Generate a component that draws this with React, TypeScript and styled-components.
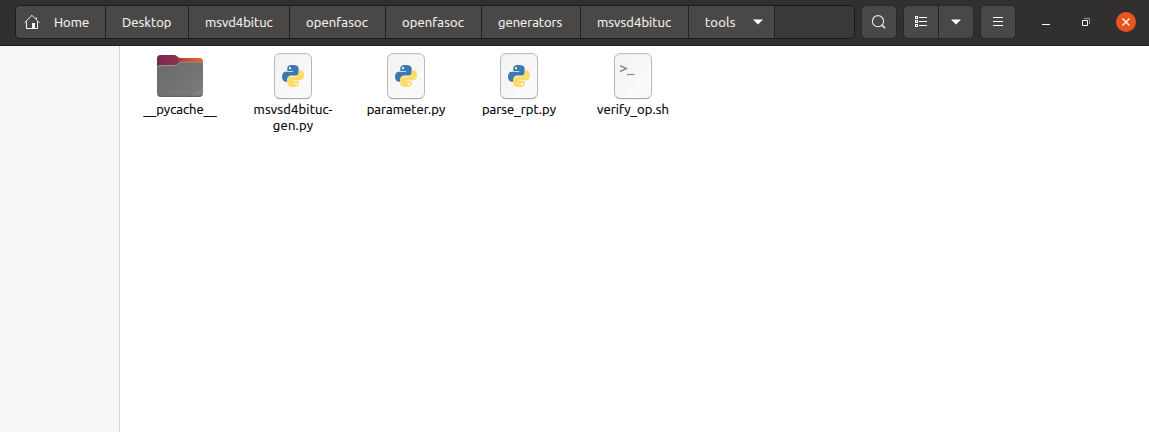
import React from "react";
import styled, { createGlobalStyle } from "styled-components";

const GlobalStyle = createGlobalStyle`
  * { box-sizing: border-box; }
  body {
    margin: 0;
    background: #fff;
    font-family: Ubuntu, "Open Sans", "Noto Sans", sans-serif;
    font-size: 13px;
  }
  svg { display: block; flex: none; }
`;

const Window = styled.div`
  display: flex;
  flex-direction: column;
  height: 100vh;
  overflow: hidden;
`;

const HeaderBar = styled.header`
  display: flex;
  align-items: flex-start;
  flex: none;
  height: 46px;
  padding: 5px 13px 0 15px;
  background: #322f30;
  border-bottom: 1px solid #1f1d1e;
`;

const PathBar = styled.nav`
  display: flex;
  width: 840px;
  height: 34px;
  border: 1px solid #1d1b1b;
  border-radius: 5px;
  background: #3a3937;
  overflow: hidden;
`;

const Crumb = styled.button<{ $width: number; $spacing?: number }>`
  display: flex;
  align-items: center;
  flex: none;
  width: ${(p) => p.$width}px;
  height: 32px;
  margin: 0;
  padding: 0 0 0 16px;
  border: 0;
  border-right: 1px solid #252323;
  background: #4a4846;
  color: #f4f3f1;
  font: inherit;
  letter-spacing: ${(p) => p.$spacing ?? 0}px;
  -webkit-text-stroke: 0.15px currentColor;
  white-space: nowrap;
`;

const HomeCrumb = styled(Crumb)`
  padding-left: 8px;
  gap: 14px;
`;

const CurrentCrumb = styled(Crumb)`
  gap: 17px;
`;

const ButtonGroup = styled.div<{ $gap: number }>`
  display: flex;
  height: 34px;
  margin-left: ${(p) => p.$gap}px;
  border: 1px solid #2a2827;
  border-radius: 5px;
  background: #4a4846;
  overflow: hidden;
`;

const ToolButton = styled.button<{ $divided?: boolean }>`
  display: flex;
  align-items: center;
  justify-content: center;
  width: ${(p) => (p.$divided ? 35 : 34)}px;
  margin: 0;
  padding: 0;
  border: 0;
  border-right: ${(p) => (p.$divided ? "1px solid #252323" : "0")};
  background: transparent;
`;

const WindowControls = styled.div`
  display: flex;
  align-items: center;
  gap: 20px;
  height: 34px;
  margin-left: auto;
`;

const ControlButton = styled.button<{ $close?: boolean }>`
  display: flex;
  align-items: center;
  justify-content: center;
  width: 20px;
  height: 20px;
  padding: 0;
  border: 0;
  border-radius: 50%;
  background: ${(p) => (p.$close ? "#e95420" : "transparent")};
`;

const Body = styled.div`
  display: flex;
  flex: 1;
`;

const Sidebar = styled.aside`
  width: 120px;
  background: #f6f6f6;
  border-right: 1px solid #d5d5d5;
`;

const FileGrid = styled.main`
  display: grid;
  grid-template-columns: repeat(4, 113px) 115px;
  align-content: start;
  flex: 1;
  padding: 6px 0 0 3px;
`;

const FileItem = styled.div`
  display: flex;
  flex-direction: column;
  align-items: center;
`;

const FileLabel = styled.div<{ $spacing?: number }>`
  margin-top: 1px;
  padding-left: 1px;
  color: #000;
  line-height: 16px;
  letter-spacing: ${(p) => p.$spacing ?? 0}px;
  -webkit-text-stroke: 0.2px currentColor;
  text-align: center;
  white-space: pre-line;
`;

const HomeIcon = () => (
  <svg width="16" height="16" viewBox="0 0 16 16" fill="none" stroke="#f4f3f1">
    <path d="M.6 8.7 8 1.3l7.4 7.4M12.5 5V3.5M2.5 7.5v7h11v-7" />
    <path d="M8 9h3v6H8z" fill="#f4f3f1" stroke="none" />
  </svg>
);

const ArrowIcon = () => (
  <svg width="10" height="6" viewBox="0 0 10 6">
    <path d="M0 .5h10L5 5.5z" fill="#fff" />
  </svg>
);

const SearchIcon = () => (
  <svg width="16" height="16" viewBox="0 0 16 16" fill="none" stroke="#e6e5e3">
    <circle cx="7" cy="7.2" r="5.6" strokeWidth="1.1" />
    <path d="m10.8 11 3.2 3.2" strokeWidth="1.7" />
  </svg>
);

const ListIcon = () => (
  <svg width="12" height="12" viewBox="0 0 12 12" fill="none" stroke="#fff" shapeRendering="crispEdges">
    <path d="M.5.5h2v2h-2zM.5 4.5h2v2h-2zM.5 8.5h2v2h-2zM4 1.5h8M4 5.5h8M4 9.5h8" />
  </svg>
);

const MenuIcon = () => (
  <svg width="10" height="10" viewBox="0 0 10 10" stroke="#fff" shapeRendering="crispEdges">
    <path d="M0 .5h10M0 4.5h10M0 8.5h10" />
  </svg>
);

const MinimizeIcon = () => (
  <svg width="8" height="8" viewBox="0 0 8 8">
    <path d="M0 6h8v1H0z" fill="#fff" />
  </svg>
);

const RestoreIcon = () => (
  <svg width="8" height="8" viewBox="0 0 8 8" fill="none">
    <path d="M2 .5h5.5V6" stroke="#9b999a" />
    <path d="M.5 2.5h5v5h-5z" stroke="#fff" />
  </svg>
);

const CloseIcon = () => (
  <svg width="8" height="8" viewBox="0 0 8 8" stroke="#fff" strokeWidth="1.3">
    <path d="m.5.5 7 7M7.5.5l-7 7" />
  </svg>
);

const FolderIcon = () => (
  <svg width="48" height="48" viewBox="0 0 48 48">
    <defs>
      <linearGradient id="folder-back" x1="0" x2="1">
        <stop offset="0" stopColor="#772953" />
        <stop offset=".42" stopColor="#8e2f4b" />
        <stop offset=".6" stopColor="#c9472f" />
        <stop offset="1" stopColor="#ef6428" />
      </linearGradient>
      <linearGradient id="folder-front" x1="0" y1="0" x2="1" y2="1">
        <stop offset="0" stopColor="#696969" />
        <stop offset=".86" stopColor="#797979" />
        <stop offset=".87" stopColor="#828282" />
        <stop offset="1" stopColor="#808080" />
      </linearGradient>
    </defs>
    <path d="M1 20V6.5Q1 3 4.500 3H18q2 0 3 1.300T24 6h19.500Q47 6 47 9.500V20z" fill="url(#folder-back)" />
    <path d="M4.500 44.800h39q3.500 0 3.500-3.500V12.700q0-3-3-3H25q-2 0-3 1.500T19 13H4q-3 0-3 3v25.300q0 3.500 3.500 3.500z" fill="url(#folder-front)" />
    <path d="M1.500 15.500q.5-2 2.500-2h15q2 0 3.200-1.700T25 10.200h19q2 0 2.500 2" fill="none" stroke="#929292" />
    <path d="M2 43q1 1.300 2.500 1.300h39q1.500 0 2.500-1.300" fill="none" stroke="#555" />
  </svg>
);

const Paper = () => (
  <>
    <defs>
      <linearGradient id="paper-fill" x1="0" y1="0" x2="1" y2="1">
        <stop offset="0" stopColor="#f3f3f3" />
        <stop offset=".6" stopColor="#f7f7f7" />
        <stop offset=".62" stopColor="#fafafa" />
        <stop offset="1" stopColor="#f8f8f8" />
      </linearGradient>
    </defs>
    <rect x="5.5" y="1.600" width="37" height="45" rx="5.5" fill="url(#paper-fill)" stroke="#b8b8b8" />
    <path d="M7 45q1.300 1.600 3.500 1.600h27q2.200 0 3.500-1.600" fill="none" stroke="#a6a6a6" />
  </>
);

const PythonIcon = () => (
  <svg width="48" height="48" viewBox="0 0 48 48">
    <Paper />
    <path
      d="M23.900 13c-4.400 0-5.600 1.500-5.600 3.700v2.200h5.900v.9h-7.500c-2.300 0-3.700 2-3.700 5s1.400 4.900 3.500 4.900h1.800v-2.500c0-2.100 1.800-3.600 3.900-3.600h4.500c1.900 0 3-1.300 3-3v-3.900c0-2.300-1.900-3.700-5.600-3.700z"
      fill="#3d79b0"
    />
    <path
      d="M24.100 35c4.400 0 5.600-1.500 5.600-3.700v-2.200h-5.900v-.9h7.500c2.300 0 3.700-2 3.700-5s-1.400-4.900-3.500-4.900h-1.800v2.500c0 2.100-1.800 3.600-3.900 3.600h-4.500c-1.900 0-3 1.300-3 3v3.900c0 2.300 1.900 3.700 5.600 3.700z"
      fill="#ffdc69"
    />
    <circle cx="21" cy="16.200" r="1.100" fill="#fff" />
    <circle cx="27" cy="31.800" r="1.100" fill="#fff" />
  </svg>
);

const ScriptIcon = () => (
  <svg width="48" height="48" viewBox="0 0 48 48">
    <Paper />
    <path d="m11 13.700 6.300 2.900-6.300 2.900" fill="none" stroke="#8c8c8c" strokeWidth="1.5" />
    <path d="M18 22.500h7.500" stroke="#8c8c8c" strokeWidth="1.2" />
  </svg>
);

const crumbs = [
  { name: "Desktop", width: 83, spacing: 0.1 },
  { name: "msvd4bituc", width: 101, spacing: 0.02 },
  { name: "openfasoc", width: 96, spacing: 0.12 },
  { name: "openfasoc", width: 96, spacing: 0.12 },
  { name: "generators", width: 99, spacing: 0 },
  { name: "msvsd4bituc", width: 108, spacing: 0.1 },
];

const files = [
  { name: "__pycache__", Icon: FolderIcon, spacing: 0.05 },
  { name: "msvsd4bituc-\ngen.py", Icon: PythonIcon, spacing: 0.2 },
  { name: "parameter.py", Icon: PythonIcon, spacing: 0.06 },
  { name: "parse_rpt.py", Icon: PythonIcon, spacing: 0.08 },
  { name: "verify_op.sh", Icon: ScriptIcon, spacing: 0.08 },
];

export default function App() {
  return (
    <Window>
      <GlobalStyle />
      <HeaderBar>
        <PathBar>
          <HomeCrumb $width={90} $spacing={0}>
            <HomeIcon />
            Home
          </HomeCrumb>
          {crumbs.map((c, i) => (
            <Crumb key={i} $width={c.width} $spacing={c.spacing}>
              {c.name}
            </Crumb>
          ))}
          <CurrentCrumb $width={86} $spacing={0.25}>
            tools
            <ArrowIcon />
          </CurrentCrumb>
        </PathBar>
        <ButtonGroup $gap={6}>
          <ToolButton aria-label="Search"><SearchIcon /></ToolButton>
        </ButtonGroup>
        <ButtonGroup $gap={6}>
          <ToolButton $divided aria-label="List view"><ListIcon /></ToolButton>
          <ToolButton aria-label="View options"><ArrowIcon /></ToolButton>
        </ButtonGroup>
        <ButtonGroup $gap={6}>
          <ToolButton aria-label="Menu"><MenuIcon /></ToolButton>
        </ButtonGroup>
        <WindowControls>
          <ControlButton aria-label="Minimize"><MinimizeIcon /></ControlButton>
          <ControlButton aria-label="Restore"><RestoreIcon /></ControlButton>
          <ControlButton $close aria-label="Close"><CloseIcon /></ControlButton>
        </WindowControls>
      </HeaderBar>
      <Body>
        <Sidebar />
        <FileGrid>
          {files.map(({ name, Icon, spacing }) => (
            <FileItem key={name}>
              <Icon />
              <FileLabel $spacing={spacing}>{name}</FileLabel>
            </FileItem>
          ))}
        </FileGrid>
      </Body>
    </Window>
  );
}
